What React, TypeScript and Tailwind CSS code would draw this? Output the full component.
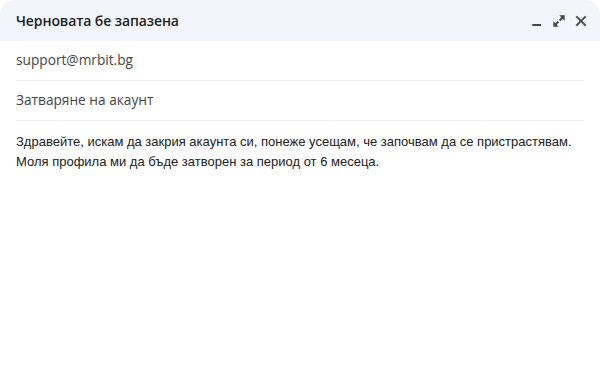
export default function App() {
  return (
    <div className="w-[600px] h-[385px] bg-white" style={{ fontFamily: '"Open Sans", Roboto, sans-serif' }}>
      <div className="h-[41px] bg-[#f2f6fc] rounded-t-[14px] flex items-center justify-between pl-4 pr-[11px]">
        <span className="text-[14px] font-semibold text-[#1f1f1f] tracking-[-0.1px]">Черновата бе запазена</span>
        <div className="flex items-center gap-[6px] text-[#444746]">
          {/* minimize */}
          <svg width="16" height="16" viewBox="0 0 24 24" aria-hidden="true">
            <path d="M5 19.5h13v-3H5z" fill="currentColor" />
          </svg>
          {/* pop out */}
          <svg width="16" height="16" viewBox="0 0 24 24" aria-hidden="true">
            <path d="M12.5 3.5h8v8l-2.9-2.9-3.6 3.6-2.1-2.1 3.6-3.6zM11.5 20.5h-8v-8l2.9 2.9 3.6-3.6 2.1 2.1-3.6 3.6z" fill="currentColor" />
          </svg>
          {/* close */}
          <svg width="16" height="16" viewBox="0 0 24 24" aria-hidden="true">
            <path d="M5 5l14 14M19 5L5 19" stroke="currentColor" strokeWidth="2.8" fill="none" />
          </svg>
        </div>
      </div>

      <div className="mx-4 h-10 flex items-center border-b border-[#efefef] text-[13.7px] text-[#444746]">
        support@mrbit.bg
      </div>
      <div className="mx-4 h-10 flex items-center border-b border-[#efefef] text-[13.7px] text-[#444746]">
        Затваряне на акаунт
      </div>

      <div
        className="px-4 pt-[11px] text-[13px] leading-[20px] text-[#222]"
        style={{ fontFamily: '"Liberation Sans", Arial, sans-serif' }}
      >
        <p>Здравейте, искам да закрия акаунта си, понеже усещам, че започвам да се пристрастявам.</p>
        <p>Моля профила ми да бъде затворен за период от 6 месеца.</p>
      </div>
    </div>
  )
}
